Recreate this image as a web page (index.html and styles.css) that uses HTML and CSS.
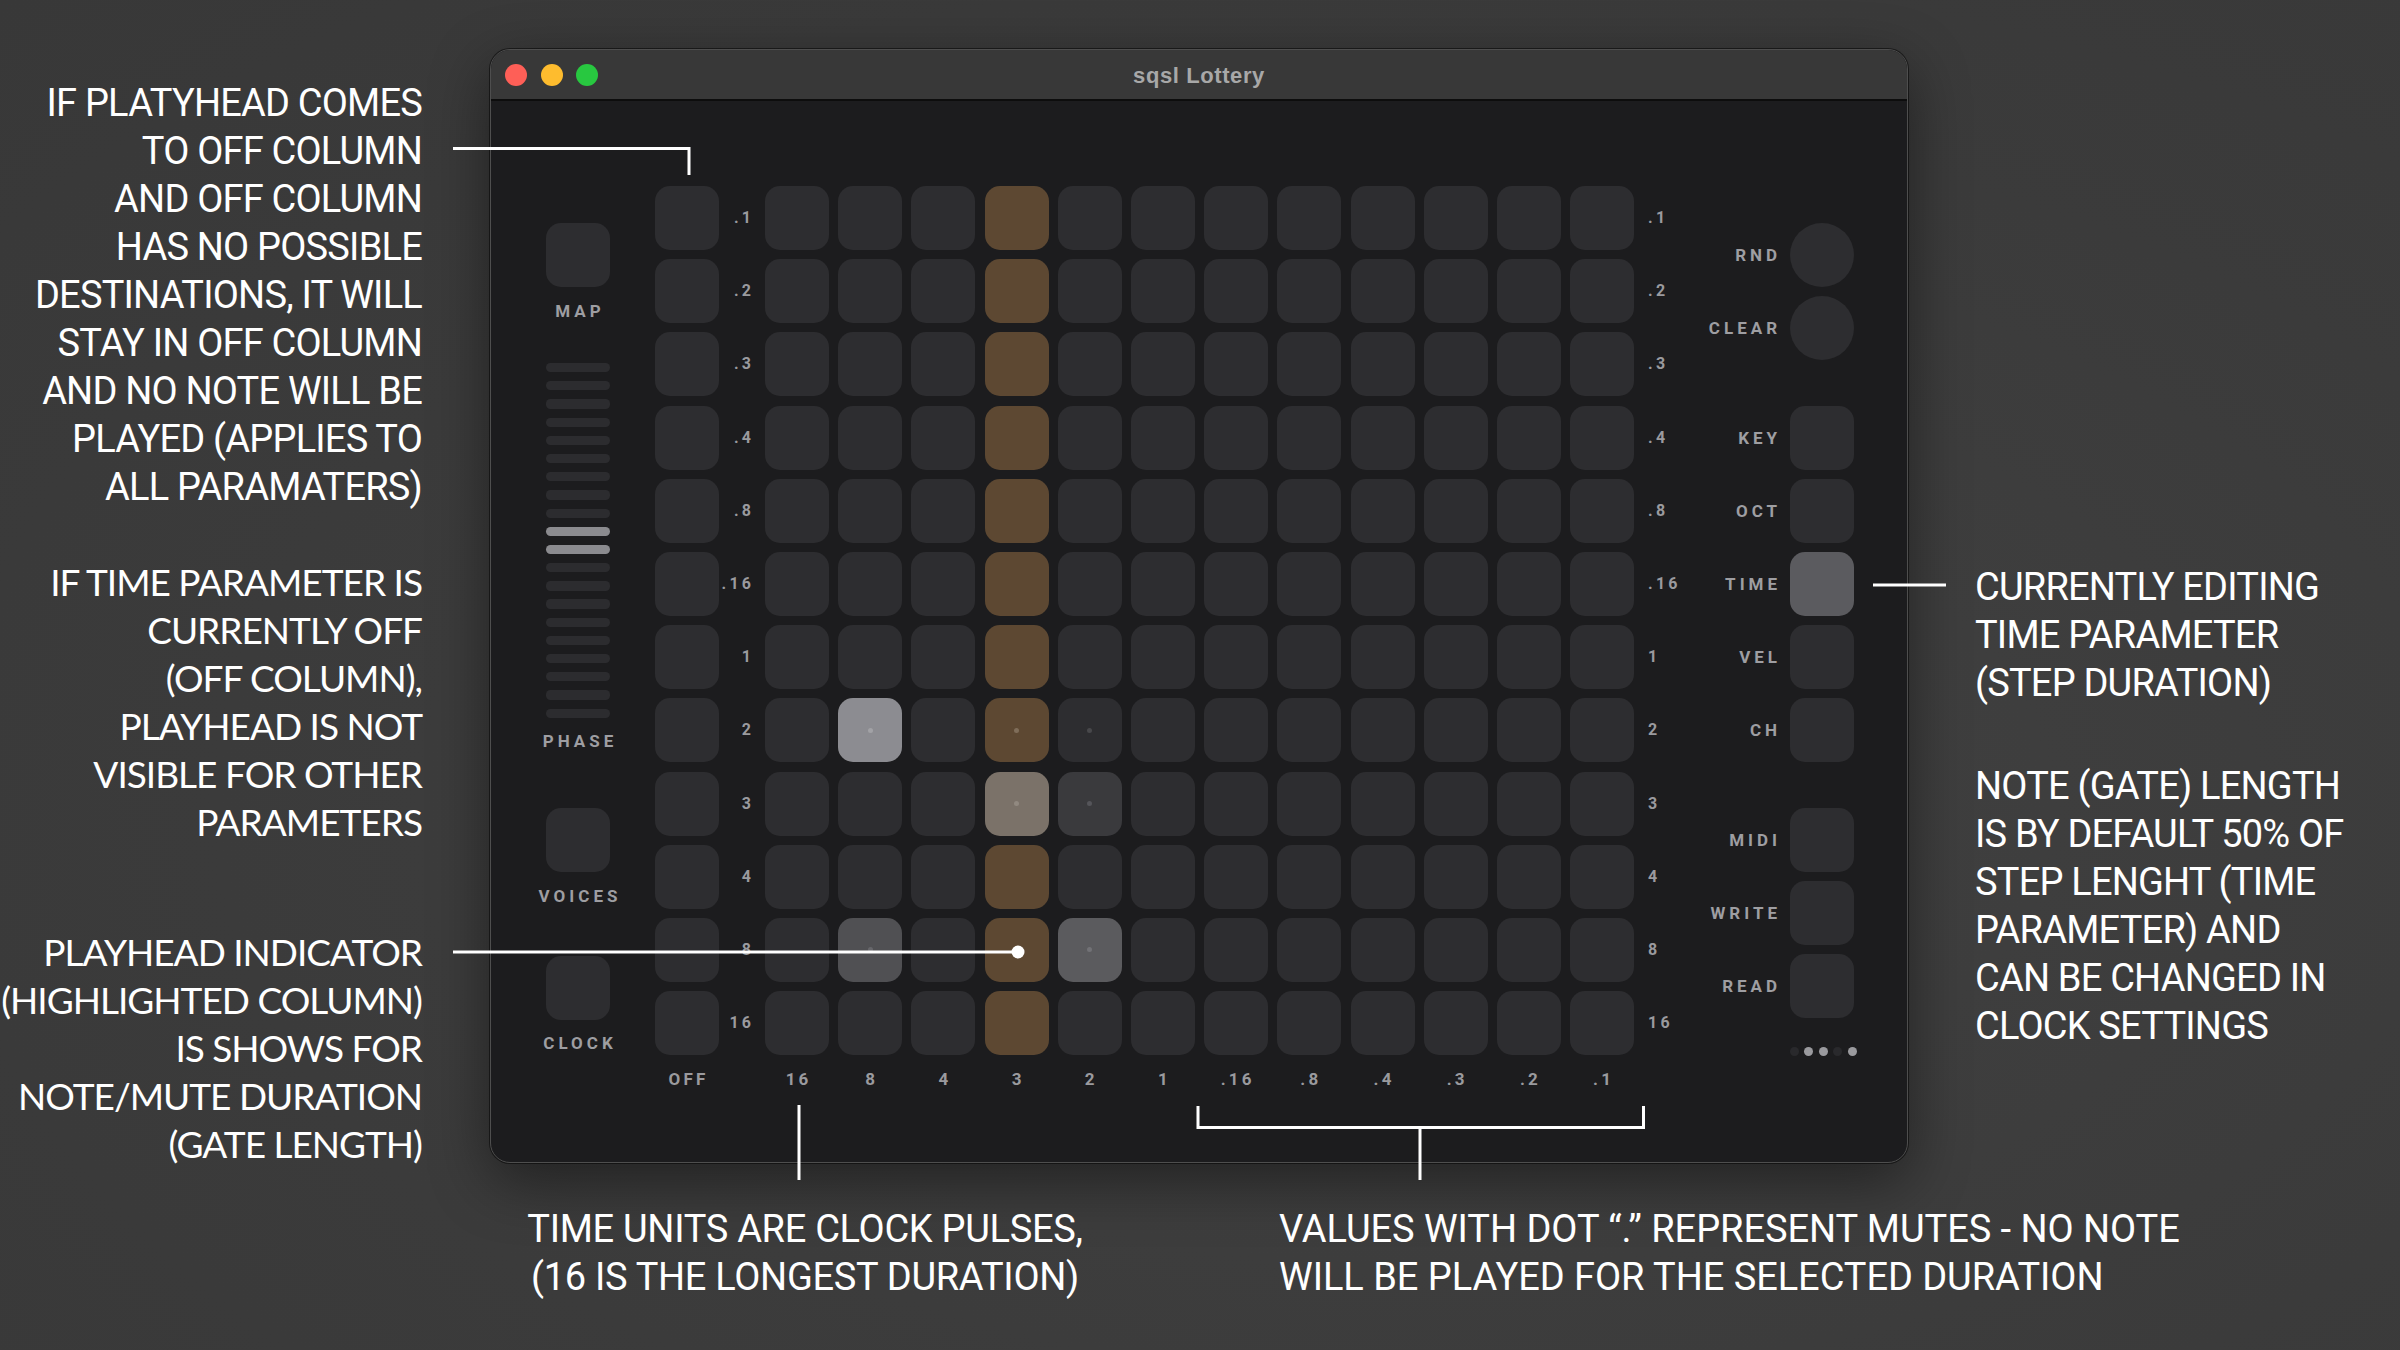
FILE: index.html
```html
<!DOCTYPE html>
<html lang="en">
<head>
<meta charset="utf-8">
<title>sqsl Lottery – annotated</title>
<link rel="stylesheet" href="styles.css">
</head>
<body>
<div class="page">

  <div class="notes-left">
    <p class="note din n1">IF PLATYHEAD COMES<br>TO OFF COLUMN<br>AND OFF COLUMN<br>HAS NO POSSIBLE<br>DESTINATIONS, IT WILL<br>STAY IN OFF COLUMN<br>AND NO NOTE WILL BE<br>PLAYED (APPLIES TO<br>ALL PARAMATERS)</p>
    <p class="note round n2">IF TIME PARAMETER IS<br>CURRENTLY OFF<br>(OFF COLUMN),<br>PLAYHEAD IS NOT<br>VISIBLE FOR OTHER<br>PARAMETERS</p>
    <p class="note round n3">PLAYHEAD INDICATOR<br>(HIGHLIGHTED COLUMN)<br>IS SHOWS FOR<br>NOTE/MUTE DURATION<br>(GATE LENGTH)</p>
  </div>

  <div class="window">
    <div class="titlebar">
      <div class="lights">
        <span class="light red"></span>
        <span class="light yellow"></span>
        <span class="light green"></span>
      </div>
      <div class="title">sqsl Lottery</div>
      <div class="title-end"></div>
    </div>

    <div class="win-body">
      <div class="side-left">
        <div class="btn first"></div>
        <div class="slabel">MAP</div>
        <div class="bars">
          <span class="bar"></span><span class="bar"></span><span class="bar"></span><span class="bar"></span><span class="bar"></span>
          <span class="bar"></span><span class="bar"></span><span class="bar"></span><span class="bar"></span><span class="bar on"></span>
          <span class="bar on"></span><span class="bar"></span><span class="bar"></span><span class="bar"></span><span class="bar"></span>
          <span class="bar"></span><span class="bar"></span><span class="bar"></span><span class="bar"></span><span class="bar"></span>
        </div>
        <div class="slabel phase">PHASE</div>
        <div class="btn voices"></div>
        <div class="slabel">VOICES</div>
        <div class="btn clock"></div>
        <div class="slabel clock-l">CLOCK</div>
      </div>

      <div class="matrix">
        <div class="row">
          <div class="cell"></div><div class="rl-left">.1</div>
          <div class="cells"><div class="cell"></div><div class="cell"></div><div class="cell"></div><div class="cell b"></div><div class="cell"></div><div class="cell"></div><div class="cell"></div><div class="cell"></div><div class="cell"></div><div class="cell"></div><div class="cell"></div><div class="cell"></div></div>
          <div class="rl-right">.1</div>
        </div>
        <div class="row">
          <div class="cell"></div><div class="rl-left">.2</div>
          <div class="cells"><div class="cell"></div><div class="cell"></div><div class="cell"></div><div class="cell b"></div><div class="cell"></div><div class="cell"></div><div class="cell"></div><div class="cell"></div><div class="cell"></div><div class="cell"></div><div class="cell"></div><div class="cell"></div></div>
          <div class="rl-right">.2</div>
        </div>
        <div class="row">
          <div class="cell"></div><div class="rl-left">.3</div>
          <div class="cells"><div class="cell"></div><div class="cell"></div><div class="cell"></div><div class="cell b"></div><div class="cell"></div><div class="cell"></div><div class="cell"></div><div class="cell"></div><div class="cell"></div><div class="cell"></div><div class="cell"></div><div class="cell"></div></div>
          <div class="rl-right">.3</div>
        </div>
        <div class="row">
          <div class="cell"></div><div class="rl-left">.4</div>
          <div class="cells"><div class="cell"></div><div class="cell"></div><div class="cell"></div><div class="cell b"></div><div class="cell"></div><div class="cell"></div><div class="cell"></div><div class="cell"></div><div class="cell"></div><div class="cell"></div><div class="cell"></div><div class="cell"></div></div>
          <div class="rl-right">.4</div>
        </div>
        <div class="row">
          <div class="cell"></div><div class="rl-left">.8</div>
          <div class="cells"><div class="cell"></div><div class="cell"></div><div class="cell"></div><div class="cell b"></div><div class="cell"></div><div class="cell"></div><div class="cell"></div><div class="cell"></div><div class="cell"></div><div class="cell"></div><div class="cell"></div><div class="cell"></div></div>
          <div class="rl-right">.8</div>
        </div>
        <div class="row">
          <div class="cell"></div><div class="rl-left">.16</div>
          <div class="cells"><div class="cell"></div><div class="cell"></div><div class="cell"></div><div class="cell b"></div><div class="cell"></div><div class="cell"></div><div class="cell"></div><div class="cell"></div><div class="cell"></div><div class="cell"></div><div class="cell"></div><div class="cell"></div></div>
          <div class="rl-right">.16</div>
        </div>
        <div class="row">
          <div class="cell"></div><div class="rl-left">1</div>
          <div class="cells"><div class="cell"></div><div class="cell"></div><div class="cell"></div><div class="cell b"></div><div class="cell"></div><div class="cell"></div><div class="cell"></div><div class="cell"></div><div class="cell"></div><div class="cell"></div><div class="cell"></div><div class="cell"></div></div>
          <div class="rl-right">1</div>
        </div>
        <div class="row">
          <div class="cell"></div><div class="rl-left">2</div>
          <div class="cells"><div class="cell"></div><div class="cell l"><i class="dot"></i></div><div class="cell"></div><div class="cell b"><i class="dot"></i></div><div class="cell"><i class="dot"></i></div><div class="cell"></div><div class="cell"></div><div class="cell"></div><div class="cell"></div><div class="cell"></div><div class="cell"></div><div class="cell"></div></div>
          <div class="rl-right">2</div>
        </div>
        <div class="row">
          <div class="cell"></div><div class="rl-left">3</div>
          <div class="cells"><div class="cell"></div><div class="cell"></div><div class="cell"></div><div class="cell t"><i class="dot"></i></div><div class="cell m1"><i class="dot"></i></div><div class="cell"></div><div class="cell"></div><div class="cell"></div><div class="cell"></div><div class="cell"></div><div class="cell"></div><div class="cell"></div></div>
          <div class="rl-right">3</div>
        </div>
        <div class="row">
          <div class="cell"></div><div class="rl-left">4</div>
          <div class="cells"><div class="cell"></div><div class="cell"></div><div class="cell"></div><div class="cell b"></div><div class="cell"></div><div class="cell"></div><div class="cell"></div><div class="cell"></div><div class="cell"></div><div class="cell"></div><div class="cell"></div><div class="cell"></div></div>
          <div class="rl-right">4</div>
        </div>
        <div class="row">
          <div class="cell"></div><div class="rl-left">8</div>
          <div class="cells"><div class="cell"></div><div class="cell m2"><i class="dot"></i></div><div class="cell"></div><div class="cell b"><i class="dot"></i></div><div class="cell m3"><i class="dot"></i></div><div class="cell"></div><div class="cell"></div><div class="cell"></div><div class="cell"></div><div class="cell"></div><div class="cell"></div><div class="cell"></div></div>
          <div class="rl-right">8</div>
        </div>
        <div class="row">
          <div class="cell"></div><div class="rl-left">16</div>
          <div class="cells"><div class="cell"></div><div class="cell"></div><div class="cell"></div><div class="cell b"></div><div class="cell"></div><div class="cell"></div><div class="cell"></div><div class="cell"></div><div class="cell"></div><div class="cell"></div><div class="cell"></div><div class="cell"></div></div>
          <div class="rl-right">16</div>
        </div>

        <div class="colrow">
          <div class="cl off">OFF</div>
          <div class="cl-spacer"></div>
          <div class="cls">
            <div class="cl">16</div><div class="cl">8</div><div class="cl">4</div><div class="cl">3</div><div class="cl">2</div><div class="cl">1</div>
            <div class="cl">.16</div><div class="cl">.8</div><div class="cl">.4</div><div class="cl">.3</div><div class="cl">.2</div><div class="cl">.1</div>
          </div>
        </div>
      </div>

      <div class="side-right">
        <div class="ctl rnd"><span class="lbl">RND</span><span class="btn circle"></span></div>
        <div class="ctl clear"><span class="lbl">CLEAR</span><span class="btn circle"></span></div>
        <div class="ctl key"><span class="lbl">KEY</span><span class="btn"></span></div>
        <div class="ctl"><span class="lbl">OCT</span><span class="btn"></span></div>
        <div class="ctl"><span class="lbl">TIME</span><span class="btn active"></span></div>
        <div class="ctl"><span class="lbl">VEL</span><span class="btn"></span></div>
        <div class="ctl"><span class="lbl">CH</span><span class="btn"></span></div>
        <div class="ctl midi"><span class="lbl">MIDI</span><span class="btn"></span></div>
        <div class="ctl"><span class="lbl">WRITE</span><span class="btn"></span></div>
        <div class="ctl"><span class="lbl">READ</span><span class="btn"></span></div>
        <div class="pager">
          <span class="pdot"></span><span class="pdot on"></span><span class="pdot on"></span><span class="pdot"></span><span class="pdot on"></span>
        </div>
      </div>
    </div>
  </div>

  <div class="notes-right">
    <p class="note din r1">CURRENTLY EDITING<br>TIME PARAMETER<br>(STEP DURATION)</p>
    <p class="note din r2">NOTE (GATE) LENGTH<br>IS BY DEFAULT 50% OF<br>STEP LENGHT (TIME<br>PARAMETER) AND<br>CAN BE CHANGED IN<br>CLOCK SETTINGS</p>
  </div>

  <div class="notes-bottom">
    <p class="note din b1">TIME UNITS ARE CLOCK PULSES,<br>(16 IS THE LONGEST DURATION)</p>
    <p class="note din b2">VALUES WITH DOT “.” REPRESENT MUTES - NO NOTE<br>WILL BE PLAYED FOR THE SELECTED DURATION</p>
  </div>

  <svg class="overlay" width="2400" height="1350" viewBox="0 0 2400 1350" aria-hidden="true">
    <g fill="none" stroke="#ffffff" stroke-width="3">
      <path d="M453 148.5 H689 V175"/>
      <path d="M453 952 H1018"/>
      <path d="M1873 585 H1946"/>
      <path d="M799 1105 V1180"/>
      <path d="M1198 1106 V1127.5 H1643.5 V1106"/>
      <path d="M1420 1127 V1180"/>
    </g>
    <circle cx="1018" cy="952" r="6.5" fill="#ffffff"/>
  </svg>
</div>
</body>
</html>
```

FILE: styles.css
```css
html, body {
  margin: 0;
  padding: 0;
  width: 2400px;
  height: 1350px;
  overflow: hidden;
  background: #3c3c3c;
}

.page {
  position: relative;
  width: 2400px;
  height: 1350px;
  display: grid;
  grid-template-columns: 422px 68px 1418px 67px 1fr;
  grid-template-rows: 1163px auto;
  background: radial-gradient(ellipse at 60% 60%, #414141 0%, #3b3b3b 60%, #383838 100%);
  font-family: Roboto, "Liberation Sans", sans-serif;
}

/* ---------- annotation text ---------- */
.note {
  margin: 0;
  color: #ffffff;
  font-size: 38px;
  line-height: 48px;
  white-space: nowrap;
}
.din {
  font-family: Roboto, "Liberation Sans", sans-serif;
  font-weight: 400;
  letter-spacing: -0.8px;
}
.round {
  font-family: Lato, "Open Sans", sans-serif;
  font-weight: 400;
  font-size: 37px;
  letter-spacing: -1px;
}

.notes-left {
  grid-column: 1;
  grid-row: 1 / 3;
  padding-top: 79px;
  text-align: right;
}
.n2 { margin-top: 47px; }
.n3 { margin-top: 82px; }

.notes-right {
  grid-column: 5;
  grid-row: 1;
  padding-top: 563px;
}
.r2 { margin-top: 55px; }

.notes-bottom {
  grid-column: 3 / 6;
  grid-row: 2;
  display: flex;
  align-items: flex-start;
  margin-top: 42px;
}
.b1 {
  width: 630px;
  text-align: center;
  letter-spacing: -0.3px;
}
.b2 {
  margin-left: 159px;
  letter-spacing: -0.05px;
}

/* ---------- window ---------- */
.window {
  grid-column: 3;
  grid-row: 1;
  margin-top: 49px;
  height: 1114px;
  box-sizing: border-box;
  border: 1px solid #4e4e4e;
  border-radius: 20px;
  background: #1c1c1e;
  overflow: hidden;
  box-shadow: 0 18px 60px rgba(0, 0, 0, 0.45), 0 0 0 1px rgba(0, 0, 0, 0.5);
}

.titlebar {
  height: 49px;
  border-bottom: 2px solid #0d0d0d;
  background: #383838;
  display: grid;
  grid-template-columns: 1fr auto 1fr;
  align-items: center;
}
.lights {
  display: flex;
  gap: 13.5px;
  padding-left: 14px;
}
.light {
  width: 22px;
  height: 22px;
  border-radius: 50%;
}
.light.red { background: #fe5f57; }
.light.yellow { background: #febc2e; }
.light.green { background: #28c840; }
.title {
  font-family: "Liberation Sans", Arial, sans-serif;
  font-weight: 700;
  font-size: 22px;
  letter-spacing: 0.6px;
  color: #a8a8a8;
  padding-top: 3px;
}

.win-body {
  display: flex;
  align-items: flex-start;
  padding-top: 85px;
  padding-left: 37px;
}

/* shared control look */
.btn {
  display: block;
  width: 64px;
  height: 64px;
  border-radius: 15px;
  background: #2d2d30;
  flex: none;
}
.btn.circle { border-radius: 50%; }
.btn.active { background: #5b5b5f; }

.slabel, .lbl {
  font-family: Roboto, "Liberation Sans", sans-serif;
  font-weight: 700;
  font-size: 17px;
  letter-spacing: 4px;
  color: #9e9ea2;
  line-height: 20px;
}

/* ---------- left side panel ---------- */
.side-left {
  width: 100px;
  display: flex;
  flex-direction: column;
  align-items: center;
}
.side-left .slabel {
  margin-top: 14px;
  padding-left: 4px;
}
.side-left .btn.first { margin-top: 37px; }
.bars {
  display: flex;
  flex-direction: column;
  gap: 8.9px;
  margin-top: 42px;
}
.bar {
  display: block;
  width: 64px;
  height: 9.3px;
  border-radius: 4.5px;
  background: #2c2c2f;
}
.bar.on { background: #8b8b8f; }
.side-left .slabel.phase { margin-top: 13px; }
.side-left .btn.voices { margin-top: 57px; }
.side-left .btn.clock { margin-top: 50px; }
.side-left .slabel.clock-l { margin-top: 13px; }

/* ---------- matrix ---------- */
.matrix {
  margin-left: 27px;
  display: flex;
  flex-direction: column;
  gap: 9.2px;
}
.row {
  display: flex;
  align-items: center;
  height: 64px;
}
.cells {
  display: flex;
  gap: 9.2px;
}
.cell {
  width: 64px;
  height: 64px;
  border-radius: 15px;
  background: #2d2d30;
  flex: none;
  display: flex;
  align-items: center;
  justify-content: center;
}
.cell.b { background: #5d4832; }
.cell.l { background: #8c8c91; }
.cell.t { background: #7b7269; }
.cell.m1 { background: #3a3a3d; }
.cell.m2 { background: #505053; }
.cell.m3 { background: #5b5b5e; }

.dot {
  display: block;
  width: 5px;
  height: 5px;
  border-radius: 50%;
  background: #48484b;
}
.cell.l .dot { background: #a2a2a6; }
.cell.b .dot { background: #7f6d59; }
.cell.t .dot { background: #918980; }
.cell.m1 .dot { background: #55555a; }
.cell.m2 .dot { background: #67676b; }
.cell.m3 .dot { background: #727276; }

.rl-left, .rl-right, .cl {
  font-family: Roboto, "Liberation Sans", sans-serif;
  font-weight: 700;
  font-size: 16px;
  letter-spacing: 3.2px;
  color: #9a9a9e;
  line-height: 20px;
  box-sizing: border-box;
}
.rl-left {
  width: 46px;
  text-align: right;
  padding-right: 10.8px;
}
.rl-right {
  width: 66px;
  padding-left: 14px;
}

.colrow {
  display: flex;
  margin-top: 4.8px;
  height: 20px;
}
.cl {
  width: 64px;
  text-align: center;
  padding-left: 3.2px;
  font-size: 17px;
}
.cl.off { flex: none; }
.cl-spacer { width: 46px; flex: none; }
.cls {
  display: flex;
  gap: 9.2px;
}

/* ---------- right side panel ---------- */
.side-right {
  width: 154px;
  display: flex;
  flex-direction: column;
  align-items: flex-end;
  gap: 9.2px;
}
.ctl {
  display: flex;
  align-items: center;
  gap: 9px;
  height: 64px;
}
.ctl.rnd { margin-top: 37px; }
.ctl.key { margin-top: 36.2px; }
.ctl.midi { margin-top: 36.4px; }

.pager {
  display: flex;
  justify-content: center;
  gap: 5.5px;
  width: 64px;
  margin-top: 19.8px;
  margin-right: -1px;
}
.pdot {
  display: block;
  width: 9px;
  height: 9px;
  border-radius: 50%;
  background: #29292c;
  flex: none;
}
.pdot.on { background: #9a9a9e; }

/* ---------- connector overlay ---------- */
.overlay {
  position: absolute;
  left: 0;
  top: 0;
  pointer-events: none;
}
```
